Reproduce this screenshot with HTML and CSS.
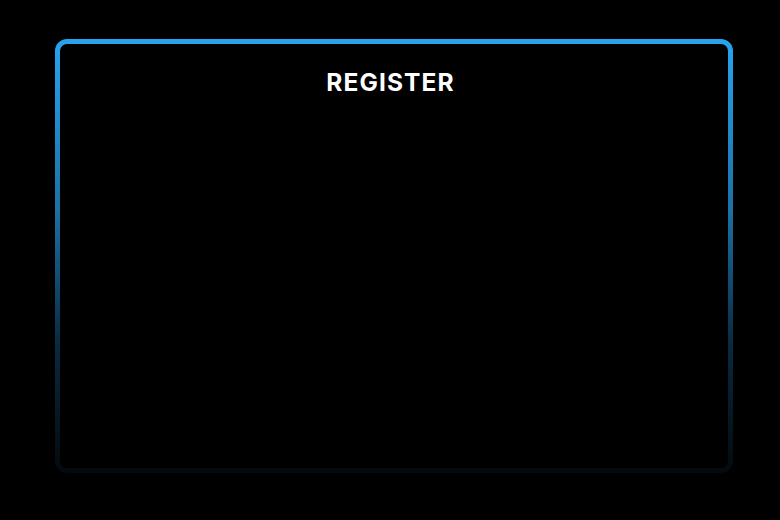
FILE: index.html
```html
<!DOCTYPE html>
<html>
<head>
<meta charset="utf-8">
<link rel="stylesheet" href="styles.css">
</head>
<body>
<div class="page">
  <div class="frame">
    <div class="card">
      <h1 class="title">REGISTER</h1>
    </div>
  </div>
</div>
</body>
</html>
```
FILE: styles.css
```css
html, body {
  margin: 0;
  padding: 0;
  background: #000;
  height: 100%;
}
.page {
  box-sizing: border-box;
  height: 520px;
  padding: 39px 47px 47px 55px;
  display: flex;
}
.frame {
  flex: 1;
  padding: 5px;
  border-radius: 12px;
  background: linear-gradient(to bottom, #27a4ee 0%, #1b6fa3 40%, #0a2a40 70%, #04090d 100%);
  display: flex;
}
.card {
  flex: 1;
  background: #000;
  border-radius: 7px;
  padding-top: 24px;
}
.title {
  margin: 0;
  text-align: center;
  color: #fff;
  font-family: Inter, "Noto Sans", sans-serif;
  font-weight: 700;
  font-size: 24.5px;
  letter-spacing: 1.1px;
  line-height: 28px;
  padding-right: 7px;
}
```
